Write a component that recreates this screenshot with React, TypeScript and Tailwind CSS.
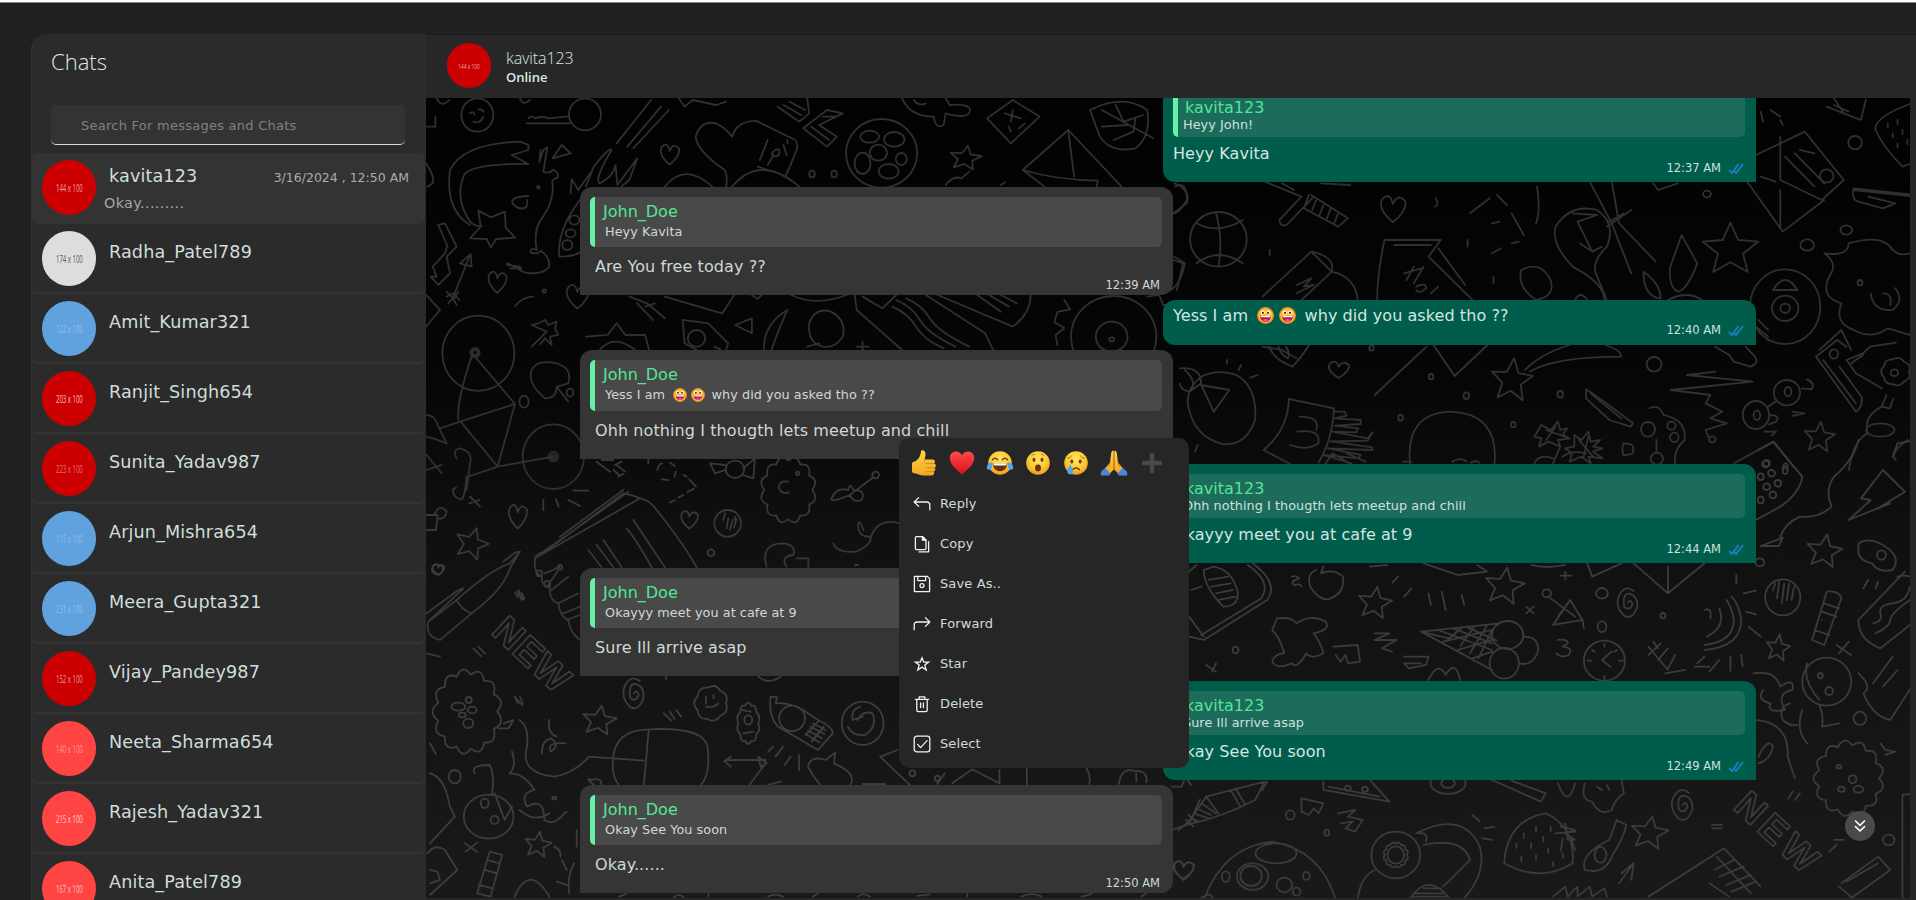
import React from "react";

/* ---------- doodle wallpaper ---------- */

const circ = (cx: number, cy: number, rx: number, ry: number = rx) =>
  `M${cx - rx} ${cy}a${rx} ${ry} 0 1 0 ${2 * rx} 0a${rx} ${ry} 0 1 0 ${-2 * rx} 0`;

const star = (cx: number, cy: number, rx: number, ry: number = rx, rot = 0.15) => {
  const p: string[] = [];
  for (let i = 0; i < 10; i++) {
    const k = i % 2 ? 0.45 : 1;
    const a = rot - Math.PI / 2 + (i * Math.PI) / 5;
    p.push(`${(cx + Math.cos(a) * rx * k).toFixed(1)} ${(cy + Math.sin(a) * ry * k).toFixed(1)}`);
  }
  return `M${p.join("L")}Z`;
};

const heart = (x: number, y: number, w: number, h: number = w) =>
  `M${x} ${y + h}Q${x - w * 1.3} ${y} ${x - w * 0.8} ${y - h * 0.7}Q${x - w * 0.2} ${y - h * 1.2} ${x} ${y - h * 0.3}Q${x + w * 0.4} ${y - h * 1.1} ${x + w} ${y - h * 0.5}Q${x + w * 1.1} ${y + h * 0.2} ${x} ${y + h}Z`;

const cloud = (cx: number, cy: number, rx: number, ry: number, n = 11) => {
  let d = "";
  for (let i = 0; i <= n; i++) {
    const a = (i / n) * 2 * Math.PI;
    const m = ((i - 0.5) / n) * 2 * Math.PI;
    const x = (cx + Math.cos(a) * rx).toFixed(1);
    const y = (cy + Math.sin(a) * ry).toFixed(1);
    d += i === 0 ? `M${x} ${y}` : `Q${(cx + Math.cos(m) * rx * 1.35).toFixed(1)} ${(cy + Math.sin(m) * ry * 1.3).toFixed(1)} ${x} ${y}`;
  }
  return d;
};

const spiral = (x: number, y: number, rx: number, ry: number = rx) =>
  `M${x} ${y}q${rx * 0.3} ${-ry * 0.3} ${rx * 0.4} ${ry * 0.1}q${-rx * 0.2} ${ry * 0.5} ${-rx * 0.7} ${ry * 0.2}q${-rx * 0.2} ${-ry} ${rx * 0.5} ${-ry * 0.9}q${rx * 0.7} ${ry * 0.2} ${rx * 0.6} ${ry * 0.9}q${-rx * 0.4} ${ry * 0.9} ${-rx * 1.1} ${ry * 0.6}q${-rx * 0.8} ${-ry * 0.6} ${-rx * 0.5} ${-ry * 1.3}q${rx * 0.5} ${-ry * 0.9} ${rx * 1.3} ${-ry * 0.4}`;

const topLeft = [
  circ(172, 75, 48, 50), "M150 70q10-8 14 4M190 65q-6-10-14-6M160 95q20 8 30-14M20 110h26v-30M50 25q15 30 38 5M300 25q10 25 30 5",
  "M325 85q10-12 20 0q20-8 40 0l60-6M320 100H450", circ(495, 73, 48),
  "M300 155L325 165L325 180L275 195L325 222Q170 220 135 250Q100 320 150 395Q165 410 185 408M300 155Q130 160 90 240Q75 360 150 405",
  "M175 362L212 382L255 365L257 412L285 443L228 447L213 473L200 447L150 445L182 410Z",
  "M362 180L358 215L370 180L382 172L370 245q20 8 28-6q22 10 14 25q-20 4-14 20q5 50-35 105Q340 420 350 480q-20-10-18 8q22 6 30-6q30 20 25 50q-25 25-75 15l-50-28M260 525l40 5M270 535l35 0",
  "M398 205L425 165L452 190Z M325 318Q270 320 278 340Q300 365 320 350L322 330", circ(355, 292, 4),
  "M452 310L455 268L475 300L510 250M480 330Q410 420 418 500Q470 500 490 480", circ(463, 390, 15, 14), circ(452, 430, 15, 12), circ(442, 465, 15),
  "M55 405L75 400L110 470L80 500L90 550L55 585L32 560L50 560L38 530L75 490L82 468Z",
  "M150 495L100 620M120 520L152 492L155 530ZM80 620L100 610L118 630M85 640L98 625L110 645M80 605l20 20M115 605l-12 20",
  heart(232, 575, 28, 34), "M285 648Q310 620 340 620", circ(373, 603, 5), heart(472, 618, 34, 38), "M18 615L60 660L18 710M18 220Q45 260 38 280L22 290",
  circ(175, 790, 108, 113), circ(165, 788, 14), circ(165, 788, 8), "M155 800Q110 930 115 990M165 800L285 942M60 1015L120 995L285 942L233 1130L122 995M145 1160L233 1130L400 1100",
  circ(400, 1100, 92, 97), circ(400, 1100, 14), circ(400, 1100, 7), "M110 1105Q95 1080 120 1075Q160 1085 150 1120L140 1200", circ(312, 935, 14, 18),
  "M18 975Q45 975 55 1010L80 1060L40 1045L18 1040M335 770L380 725L335 705L355 700L375 690L385 705L410 695L405 715L415 735L390 740L395 765L375 745L362 762",
  "M375 925Q320 880 335 840Q350 810 400 818Q460 830 445 880L410 890Q410 925 375 925ZM410 890L445 935", circ(450, 908, 10, 12),
  "M20 1095L65 1150M20 1140L65 1125",
].join("");

const topMid = [
  "M205 30L118 160M230 50L145 170M250 60L160 175M40 290L60 230Q100 170 105 180Q60 270 75 280Q110 260 115 225L120 285L170 205L150 270L130 290",
  heart(252, 192, 24, 32), "M395 290Q400 240 385 235Q320 180 318 140Q330 90 370 100Q395 115 410 140Q420 95 470 92L570 150Q580 165 570 190L545 260",
  "M480 210l20-60M500 225l15-30M475 230l30 12M510 190q20-25 20 0q-10 20-20 0M540 165l8 30M550 150v10",
  "M240 290Q290 215 360 290M410 290Q480 190 580 290", circ(612, 252, 7, 10), circ(668, 252, 7, 10),
  circ(788, 190, 90, 103), circ(758, 140, 24, 18), circ(820, 148, 26, 22), circ(780, 188, 22, 24), circ(740, 220, 20, 32), circ(838, 207, 14, 18), circ(806, 244, 25, 22),
  "M840 25Q860 80 920 80Q925 120 945 105L950 70Q1010 90 1012 60Q1010 40 960 45L950 25M870 30q10 20 30 10M275 25l15 25 20-20 60 15 25-10",
  "M525 50L580 95L605 70L600 25M540 45l45 30M555 35l40 25M590 115L650 170L675 140L630 105L690 70L650 60ZM610 110l45 40M640 80l30 0",
  "M1055 85L1120 30L1188 80L1115 160ZM1100 70l40 15M1120 60l-5 35M1110 110l5 15M1135 115l15-15", star(1000, 205, 42, 38), "M950 285q20-30 40-20l20-20M1090 285l10-8",
  "M1315 60Q1400 10 1460 60Q1470 140 1430 175Q1370 190 1340 140ZM1345 60L1475 145M1380 45l20 50 50-20M1345 110l65-5M1375 150l50-25 5-40",
  "M1260 120L1145 240L1200 290M1260 120L1275 260M1260 120L1395 290M1145 240Q1230 270 1335 272L1332 290",
  "M1530 290Q1560 270 1560 330Q1540 370 1528 370M1528 500L1555 520Q1545 580 1520 600",
  "M150 620l45 20 45 45M170 640l40 50M190 650l25-10M240 620L385 670L415 615M460 615l15 12 10-12M560 615Q620 650 700 615",
  "M40 740L95 735L118 700L140 735L190 735L200 780M75 780Q110 730 165 780M285 690L350 700L400 760L395 780M285 690L290 760L320 780M365 770l15 8", circ(320, 745, 22, 25),
  "M418 705L460 685V730ZM550 660Q490 700 490 780M550 660Q520 740 510 780M605 700Q620 650 660 665Q700 690 690 740Q670 775 640 770Q600 760 605 700M600 770l30-10",
  "M720 615L725 660L840 780M740 620L790 655L825 615M1165 615Q1165 670 1120 710L930 615M900 615L1050 730L1070 780M825 630q40 20 60 60t90 80M815 650q40 20 60 60t70 65M850 625q40 20 60 60t100 85M1030 615l60 50M1060 615l50 35M1090 615l40 25",
  circ(1375, 740, 108, 122), circ(1370, 740, 40, 45), circ(1370, 748, 6), "M1250 630l15 28-32 8-8 30 25 18-22 22 5 30M1460 620l30-5 10 30 30 0M725 770l30 0M740 755v25",
].join("");

const topRight = [
  circ(140, 448, 58, 82), "M95 400Q140 435 190 390M95 520Q140 470 190 520M135 368Q150 450 140 530M50 280Q85 300 75 340L48 370M48 510L68 520L55 600",
  "M235 275L310 320L265 390Q265 410 280 405L335 320M325 315L315 355L385 410L405 385L330 315M340 330l-8 30M355 345l-8 30M370 355l-8 30M385 370l-8 30M270 280l25 20M350 280l60 5",
  heart(497, 355, 26, 42), "M585 325q8 20-2 25M655 370l40-45M710 315l20 30M740 370l25 65M740 460l15-5M792 290Q800 360 790 400M650 450v20M700 400l15-5M700 490l18-15M703 560v20M245 480v15",
  "M480 450H595L570 500L660 630M480 450Q465 550 465 630M500 465H575M590 475l55 110M520 550l35-15M525 570l15-40M540 580l20-50M545 590q20-15 20 5q-15 20-20 5M575 610l15-20",
  "M230 620L330 485L372 545L310 630M330 485Q380 500 372 545Q420 560 425 630M300 585l30-20-15 25 20-5-35 25",
  "M930 630Q930 580 865 530Q820 460 830 410Q860 340 915 360Q955 400 935 470Q900 520 915 560L935 630M865 370l50 5-40 20 30 90 20-15M870 630q10-30 25 0",
  "M900 275L945 400L985 550M945 275L960 400L1035 515M935 410L985 360M940 395l30-25M880 460l20 20",
  "M760 540Q800 510 820 570Q830 620 790 630Q750 590 760 540M1010 545Q1045 580 1045 625Q1010 620 1010 545M1088 435L1120 520Q1100 600 1080 605Q1060 590 1065 530ZM1060 630q40-30 70 0",
  star(1188, 480, 60, 82, 0), circ(1300, 650, 72, 112), circ(1300, 655, 27, 38), circ(1300, 655, 10, 14), "M1275 600q25-60 50 0ZM1245 690l20 30M1240 710l25 30M1245 725l20 25",
  "M1240 195L1340 125L1420 270L1375 330L1290 270V140M1215 260L1295 425L1380 330M1300 200l60 90M1320 190l60 90M1330 180l30 10M1290 300V410M1250 260l30 15M1030 280l10 20 40-20",
  circ(1385, 258, 14, 20), "M1440 300L1568 320M1440 295Q1435 330 1450 335L1500 355L1525 340L1470 320M1440 295L1568 315", circ(1443, 158, 14, 20), circ(1425, 420, 12, 14), circ(1345, 465, 14, 17), circ(1140, 312, 8, 10),
  "M1385 50L1420 70L1400 25M1420 70L1455 90L1465 30M1400 45l30 20M1485 120Q1480 80 1568 35M1485 120Q1500 170 1540 230L1568 215M1510 100v12M1530 90v12M1520 130v12M1540 120v12M1530 160v12M1550 150v12",
  "M1250 65l5 30M1270 60l20 20M1290 90l5 15M1380 490Q1430 500 1430 460Q1500 430 1520 480Q1535 500 1555 490M1380 490Q1410 520 1390 560Q1370 620 1415 640Q1400 700 1440 720Q1480 750 1510 715L1555 735M1475 610Q1480 665 1520 660Q1545 630 1525 595M1500 610q20 0 15 35M1370 780l45-60 20 60",
  circ(1453, 578, 5, 8), "M230 770l40 10 30 25M450 770v12",
].join("");

const midRight = [
  "M45 110Q80 85 120 105Q165 140 160 240Q140 320 90 312Q30 290 18 200Q10 150 45 110M45 135L105 150L72 215ZM0 85Q45 80 45 130L20 155Q0 150 0 130M10 90q25 30 15 60M100 60v10M130 75l-5 15M165 105l-15 8M38 315l-6 20",
  "M190 20Q200 60 240 80Q260 50 275 15M210 20Q215 45 230 55Q235 35 225 20M232 177L328 205Q325 300 295 368M232 177Q230 270 178 330L235 372M255 230Q300 230 290 270M250 275Q300 265 295 310Q270 335 235 315",
  "M330 215l20 0 5 12-25 8 55 5 0 12-55 5 50 8-5 12-50-2 75 20 10-18-10 25-80 2 90 18 0 8-95-5 70 20-5 10-75-10 60 25M310 370l15-30 35 30M355 340l40 25",
  heart(338, 88, 22, 26), "M525 20L415 165M540 15L585 108L655 15", star(707, 122, 46, 68, 0.1), "M735 90Q770 40 830 15M745 95Q800 50 940 50Q940 30 905 15",
  "M490 372Q480 220 575 215Q680 220 670 372M475 365h18M580 365q20-15 30 0M620 368q10-10 18 0M865 148Q880 160 965 250L960 260L915 240L865 175ZM875 160L940 235",
  "M770 255l20 15 15-25 5 25 15-5-10 20 15 10-25 5 5 20-25-15-20 15 5-25-15-5ZM840 285l15 15 15-25 5 30 20-5-15 20 20 5-20 10 20 20-30-5 5 20-20-20-25 15 5-25-15-15 20-5ZM795 370L810 320M755 370q10-30 40-15M815 350q20-20 50-10",
  "M780 270l40 20M800 260l-20 40M850 300l30 50M870 290l-10 60",
  "M1000 205Q1020 190 1030 225Q1080 240 1075 300Q1050 330 1055 372M1015 300V340", circ(997, 268, 15, 22), circ(1047, 257, 9, 12), circ(1053, 292, 9, 14), circ(1016, 356, 13, 18),
  "M1045 150L1220 125L1080 105L1140 95M1045 150L1130 165L1120 190L1155 215L1130 235L1165 250L1120 270L1125 290", circ(1134, 298, 7, 9),
  circ(1293, 158, 28, 38), circ(1227, 225, 28, 42), circ(1295, 155, 7, 14), circ(1229, 226, 7, 14), "M1253 200l18-18M1335 118Q1355 130 1345 148L1325 145M1255 225q25 0 15 20l-15 8M1305 215l25 5-25 8M1245 275l25 0-10 12M1140 20L1170 45L1180 65L1215 80Q1235 70 1225 50L1205 20",
  "M1355 50L1440 215Q1455 200 1452 170L1405 80M1355 50L1400 0L1420 20M1370 60L1440 190M1420 60L1440 100L1495 145M1420 60l35-20 15-20 55-12M1430 70l25-25", circ(1393, 42, 9, 14),
  cloud(1525, 95, 28, 38, 7), circ(1522, 98, 8, 10), star(1362, 293, 34, 48, 0.1), "M1180 370L1265 305L1310 385M1505 165L1495 200L1512 205L1520 175M1495 200Q1455 230 1465 280Q1435 300 1425 390M1525 360Q1510 340 1550 300", circ(1492, 270, 30, 20),
  circ(1250, 370, 7, 10), circ(1290, 378, 5, 8), circ(1010, 73, 16, 22), circ(610, 167, 6, 10), circ(810, 163, 6, 10), circ(408, 24, 5, 8), circ(535, 110, 5, 8), circ(470, 233, 5, 9), circ(710, 254, 5, 8), "M945 310q-5 20 0 35q25 0 20-15q5-20-20-20",
].join("");

const bottomRight = [
  "M210 370Q265 430 240 480L110 600L80 590M200 375Q250 425 228 475L105 585M110 390Q110 440 150 500Q180 500 180 460Q170 390 130 380ZM120 420l40-10M125 440l40-10M135 460l35-10M140 480l35-10M80 530l30 60M85 450l20-10M95 375l-15 20",
  "M340 390Q320 400 328 440Q345 480 365 478Q400 460 395 410Q375 385 350 400L355 380M290 410q10-5 15 5q-20 10-10 20q15-5 15 5",
  "M260 535Q290 530 300 550Q330 520 360 545Q370 570 335 580Q350 610 355 640Q330 660 320 640Q300 690 290 670Q260 690 250 665Q255 640 275 640Q265 590 250 570Z",
  star(460, 490, 36, 50), star(725, 440, 42, 58), "M535 445L520 470M508 410l-12 18M570 460l5 35M597 455l8 55M638 465l5 30M450 380l35-5M770 500l15 20M785 500l-15 20M850 395v24M840 407h22M1200 405v24M1115 680l30 0",
  "M555 575L715 550M555 575L700 690M555 575l60 22M640 562l-30 35M665 558l-30 60M690 555l-35 85M700 570l-28 85M590 570l110 60M620 565l80 45M650 562l60 40M600 605l100-35M630 630l70-30M660 655l40-20", circ(732, 585, 32, 42), circ(725, 670, 30, 46), "M765 590Q800 590 793 640Q780 680 755 670",
  circ(812, 460, 9, 12), "M815 470L870 530M860 480L885 540L825 555ZM885 540L888 565M860 480L835 530", circ(925, 460, 12, 16), spiral(978, 488, 24, 44), circ(925, 560, 9, 16), circ(1050, 527, 5, 8), circ(175, 630, 6, 10),
  "M375 620l50-5 5 50-25 5-5-25-10 20-10-20M460 580l30 0-30 20 45 0-30 25 20 10M520 650l50 0-5 25-35 10-10-15 35 0M115 675l20 20M135 670l-8 25M570 720q20-60 35-15q20-50 30 15",
  circ(930, 662, 42, 60), "M945 635L925 660L942 680M930 612v8M930 708v8M895 662h8M960 662h8M905 630l5 5M955 630l-5 5M835 600q20-5 20 12q-15 8-8 8q20 5 10 25q-15 10-25-5M1020 620l40 70M1030 605l10 20M1045 610l-25 35M1060 625l-20 35M1075 645l-15 40M1095 690l-40 10M1135 510q15-10 12 25",
  "M1135 630Q1210 620 1210 540Q1205 490 1190 470M1135 615Q1195 605 1195 540Q1190 500 1180 480M1140 590Q1180 560 1165 505M1215 460l25-8M1220 515l20 8M1225 560l25 30M1120 670l15-20M1165 660l-20 35M1188 650v42M1210 645l3 35",
  circ(1295, 472, 36, 54), "M1275 450l5-20M1283 475l5-50M1293 490l5-60M1303 480l5-50M1313 480l5-40M1385 455Q1410 450 1415 475L1380 615L1355 600ZM1380 490l30 15M1375 515l30 15M1360 570l30 15M1375 540v0",
  "M1545 395L1450 540Q1450 600 1495 625L1568 540M1530 410Q1550 400 1568 420M1480 550q20-5 15-30t25-30t35-50M1485 580q30-20 30-40t50-70M1470 420l-10 25M1490 425l-5 20", star(1285, 625, 26, 42),
  circ(1385, 725, 50, 72), "M1370 795Q1380 830 1375 860L1410 850M1345 670Q1335 720 1370 780", circ(1372, 707, 5, 8), circ(1390, 753, 8, 12), "M1450 700Q1480 740 1460 760Q1480 830 1515 840L1568 720M1500 740l30-50M1480 730l40-80M1405 615l30 30M1430 605l-20 35",
  "M1235 700Q1280 690 1290 740Q1320 710 1315 750Q1280 760 1300 810Q1260 820 1270 790Q1240 780 1255 750M1335 810Q1320 870 1345 910M1325 855Q1310 860 1295 840Q1285 800 1310 790", circ(1453, 835, 13, 20), cloud(1430, 1015, 62, 100, 13), circ(1438, 1018, 8, 12), circ(1415, 1048, 7, 8), circ(1450, 1048, 10, 10), circ(1410, 980, 5),
  "M1240 840Q1310 850 1305 950L1320 1015M1245 950q20-60 30-30q-5 40-30 50M1495 910l10 20 20 5-20 10M1540 1380V1065L1568 1060M1150 1155h20M1150 1165h20M1315 1055l-8 20M1330 1060l-10 20M1400 1200l20 0M1405 1215l-15 20",
  "M1275 5L1335 110Q1330 160 1290 200L1240 240M1275 5L1245 30", circ(1260, 72, 7, 10), circ(1272, 100, 7, 10), circ(1285, 130, 7, 10), circ(1250, 110, 6, 10), circ(1262, 140, 7, 10), circ(1275, 165, 7, 10), circ(1250, 180, 6, 10), circ(1300, 90, 5, 12),
  "M1500 90L1545 155L1490 205L1515 190L1430 240L1475 180L1455 175ZM1450 0Q1440 60 1400 110Q1380 150 1395 200Q1370 235 1330 230Q1300 250 1290 290M1250 318l45-25-8 25ZM1520 50l10-40 38-10",
  star(1380, 335, 38, 52), "M1450 310Q1470 290 1500 315Q1540 350 1520 390Q1490 400 1478 370Q1450 360 1450 335Z", circ(1497, 345, 9, 14), circ(1248, 367, 9, 12), "M990 370L1060 460L1135 370M1060 380V460M895 370L905 410L965 370M560 370L630 405L690 395L670 375M780 375q30 12 70 0",
  "M110 1380Q150 1220 250 1205Q350 1230 380 1380M130 1380Q125 1350 105 1375", circ(210, 1310, 32, 40), circ(207, 1308, 22, 30), circ(258, 1240, 42, 30), circ(275, 1335, 16, 22), circ(155, 1310, 8, 16), circ(320, 1308, 7, 12), circ(300, 1355, 8, 12),
  circ(503, 1245, 50, 70), circ(503, 1245, 17, 26), cloud(503, 1245, 22, 34, 12), "M545 1180Q640 1110 675 1220Q690 1300 640 1380M560 1215Q640 1190 655 1260L600 1340M425 1380Q430 1310 460 1290M530 1380Q570 1290 615 1380M540 1360h60M535 1370h70M560 1345h35M550 1180q20-5 15 25M660 1125l15 20M685 1165l20-5M680 1195l20 5",
  "M725 1270Q730 1140 810 1120Q870 1160 865 1270Q800 1330 725 1270M750 1210v14M765 1180v14M780 1210v14M790 1160v14M805 1190v14M820 1160v14M760 1250v14M790 1245v14M815 1225v14M825 1265v14M845 1240v14M830 1180l40-5M850 1150l5 50 15 0-20-20 20-10-30-10M845 1195l-5 40M860 1190l10 40",
  "M975 1155L955 1140L940 1200Q880 1240 890 1290Q930 1305 945 1250Q970 1190 975 1155", circ(922, 1245, 12, 24), star(1022, 1180, 40, 52), spiral(1090, 1095, 25, 46),
  "M890 1030Q880 1080 905 1085Q920 1130 945 1110Q950 1080 970 1060L965 1020M915 1040l10 10M935 1035l5 15", "M355 1025V1050L490 1085L450 1020M365 1040L470 1070", circ(405, 1045, 6, 8), circ(440, 1048, 6, 8),
  "M75 1155L115 1070L235 1025L215 1080Q150 1130 75 1155M45 1170L75 1155M115 1070l25 50M165 1050l20 50M175 1045l20 50M85 1135l15 10M90 1120l30 15M95 1105l30 20M105 1090l30 30M45 1040l20 0 5-20M230 1050L240 1025", circ(610, 1030, 36, 32), circ(610, 1030, 14, 14),
  circ(287, 1125, 9, 14), circ(362, 1178, 5, 9), "M310 1075l45 15-10 30-10-15-10 20-15-10ZM385 1120l35-10-15 20 30 10-15 35-20-10 15-20-25 5M700 1020L800 1085L810 1060L740 1022M835 1030q20 80 35 0",
  "M960 1330L990 1270M965 1300L990 1270L985 1320M1020 1370L1175 1225L1250 1340M1160 1250l70 110M1155 1290l40-30M1165 1310l50-30M1180 1335l50-30M1190 1355l50-30M1145 1330l40 40M1415 1330L1490 1250L1515 1290L1430 1380M1410 1340l25 30M1425 1325l65-55", circ(1512, 1200, 12, 16),
  "M825 1370l25-30 5 30 20-30 0 30 25-30 5 30 25-25 5 25", heart(68, 1288, 22, 28),
].join("");

const bottomLeft = [
  cloud(95, 455, 60, 112, 13), circ(77, 440, 14, 12), circ(98, 420, 6, 9), circ(105, 450, 9, 10), circ(97, 490, 10, 14), circ(85, 465, 7), "M168 490l20-10-10 25-20 0",
  "M460 508Q570 500 578 560Q585 640 565 675M460 508Q390 510 388 600Q385 650 400 675M460 508L450 675M388 595L450 602M200 480Q220 500 215 560Q200 640 270 650Q310 640 340 590L388 595M245 580q0-40 18-45q20 20 0 40q-10-30 30-25M260 480q-5 40 15 50M20 550l12 32",
  star(360, 483, 36, 46), spiral(430, 400, 24, 46), cloud(585, 430, 30, 48, 7), "M575 410v20M590 405v10M575 440q15 5 25-10M490 460l15 22M502 455l10 22M515 450l10 20M495 350v8M680 350q20 25 45 0",
  "M705 410Q700 470 720 500L800 570L830 520Q830 500 800 480L770 450Q740 425 715 430L718 412Z", circ(748, 475, 26, 38), "M790 490l25 20M785 500l28 22M780 512l28 22M775 522l28 25M800 485l-25 40M812 500l-25 45",
  circ(890, 490, 42, 65), "M860 500Q870 530 895 525Q920 500 910 460Q890 450 880 480M885 440q-20 10-15 40l20-10", cloud(660, 490, 20, 55, 10), circ(660, 480, 8, 14), "M650 520l20-5M645 450l20 5",
  "M615 600H695M625 590L612 603L625 620M680 590L697 610L685 620ZM695 610L662 675M700 675l25-10M730 560l-15 30M710 560l-10 15M745 590l-12 25M762 585v45",
  "M780 620Q785 585 815 600L835 578L832 610Q880 640 865 675M780 620Q790 650 805 675M890 672h45M960 570L925 590L985 675M1040 672L1055 640", circ(990, 640, 6, 9), circ(1040, 655, 5, 8), "M1070 670L1110 628L1165 670L1165 630M1220 625V675M1340 625Q1350 650 1345 672M1405 672q5-50 30-40q30 0 25 35M1440 640v25M1510 650q15-20 20-20l20 45",
  circ(138, 770, 50, 66), "M110 640Q100 615 140 615Q150 640 145 700M185 575Q195 620 180 640Q210 640 230 690Q200 700 215 740Q250 710 250 780Q270 800 290 760L295 755M150 700L170 780L185 740M200 750q30 40 60 10", circ(130, 730, 8, 14), circ(150, 780, 8, 12), circ(70, 650, 12, 20), circ(270, 715, 4),
  "M20 640Q50 650 60 740L70 770L20 850M15 880Q30 850 50 870L75 930L20 1005M20 930l15 5 5 25-20 10M140 875L165 885L142 1010L115 1000ZM135 900l25 10M130 930l25 10M118 975l28 10M190 1010Q220 910 260 1010M90 850L115 875M115 848L92 875",
  star(237, 855, 28, 40), "M270 860q15 10 12 30M285 900l10 30M310 910q-15 40-10 90M275 965l20 10M315 810v50M190 410l15 25M195 95l10 25M205 100l5 15", circ(35, 28, 11, 15),
  "M350 675q-20-25-5-15q20-10 20 15", heart(1535, 930, 20, 30), "M1525 810L1550 780L1568 720M1540 780l15 20M1545 765l15 20M400 1010l15-8M510 1012q10-15 20 0M580 1010v-8M700 1010q15-12 30 0M790 1010l10-10M880 1010q10-15 25 0M1000 1008l25-5M1100 1010v-8M1210 1010q20-15 40 0M1330 1010l20-8M1450 1010l10-10",
].join("");

const midLeft = [
  "M345 355Q350 340 375 335L610 160Q640 165 660 175Q690 180 710 210Q790 310 830 382M345 355L660 175M625 155L370 335M610 150L420 290M640 240Q700 330 735 382M620 265Q650 300 695 382M550 300L605 382M530 315L580 382M505 330L545 382",
  "M345 355Q340 400 365 410Q365 440 390 440Q385 480 415 490Q420 530 445 540Q450 580 480 600M375 400L420 380M385 435l30-45M395 450l50-40M415 490l60-30M430 520l50-20M440 540l40-15", circ(358, 400, 9), circ(382, 432, 9), circ(420, 382, 7),
  "M300 335L270 370Q210 390 110 480L25 545Q15 590 60 600L155 520Q250 450 270 385L300 335L285 338L250 365M110 480Q125 510 155 520M30 540L130 445L115 450L20 520", star(155, 312, 52, 50, 0.3), heart(293, 228, 28, 38), heart(808, 238, 26, 28), heart(55, 388, 18),
  "M150 170l30 30M148 190l30-10M140 110Q135 170 125 178Q100 175 98 150l10-8M370 180v30M408 178l8 22M445 180l35 18M460 152l45 0M18 225h35l-5 45H20M45 220Q60 190 80 215Q75 240 55 235",
  circ(945, 88, 28, 26), "M915 75L870 70L885 100L915 90M970 85L1005 55L1000 115L970 105", circ(923, 250, 40), "M910 240l5-20M920 265l5-30M930 270l8-30M942 262l8-25M945 230v10", circ(873, 338, 10),
  cloud(1105, 150, 72, 88, 12), "M1105 125q-30-5-28 20q10 20 30 12", circ(1133, 100, 5), circ(1367, 105, 10), "M1360 112L1290 165Q1230 190 1235 175Q1250 140 1285 150Q1290 125 1300 150Q1340 150 1325 180Q1300 190 1290 165",
  "M530 65l40 30M545 60l35 0M580 90l18 15M590 75l25 20M595 110l15-8M605 65l-20 10M790 105l10 5M808 118l20 22M822 146l-20 10M790 165l-15 8M765 180l-15 8M712 90q5-20 15-20M750 68l15 10M768 95l-5 15M745 120l-20-2M685 60v10",
  "M1240 310Q1250 340 1310 335Q1360 310 1350 290Q1310 290 1315 250Q1320 240 1330 270M1350 300Q1370 230 1440 250M1040 380Q1020 310 1090 310Q1130 315 1120 345Q1080 350 1100 380M1130 355h35v25M1305 375l10 0M295 450l15 28M285 458l8 14M175 620l20 20M160 625l25 25M285 770l8 20M300 770l8 20M20 640l40 10",
].join("");

const layers: { t: string; d: string; o: string }[] = [
  { t: "translate(420 90) scale(.3333)", d: topLeft, o: "#303030" },
  { t: "translate(570 90) scale(.3954 .3333)", d: topMid, o: "#303030" },
  { t: "translate(1150 90) scale(.4886 .3333)", d: topRight, o: "#303030" },
  { t: "translate(1180 340) scale(.4694 .3333)", d: midRight, o: "#323232" },
  { t: "translate(420 440) scale(.3333)", d: midLeft, o: "#383838" },
  { t: "translate(1150 440) scale(.4886 .3333)", d: bottomRight, o: "#3b3b3b" },
  { t: "translate(420 560) scale(.4974 .3333)", d: bottomLeft, o: "#3d3d3d" },
];

const Wallpaper = () => (
  <svg className="absolute inset-0 h-full w-full" viewBox="426 98 1484 800" preserveAspectRatio="none" fill="none" strokeWidth="1.8" strokeLinecap="round" strokeLinejoin="round" aria-hidden="true">
    {layers.map((l) => (
      <path key={l.t} transform={l.t} d={l.d} stroke={l.o} vectorEffect="non-scaling-stroke" />
    ))}
    <g stroke="#3d3d3d" strokeWidth="1.6" className="font-['Liberation_Sans'] font-bold" fontSize="38">
      <text transform="translate(490 633) rotate(43)" textLength="90">NEW</text>
      <text transform="translate(1732 808) rotate(43)" textLength="98">NEW</text>
    </g>
  </svg>
);

/* ---------- emoji ---------- */

const FaceDefs = () => (
  <svg width="0" height="0" className="absolute">
    <defs>
      <radialGradient id="skin" cx=".5" cy=".35" r=".65">
        <stop offset="0" stopColor="#ffe65c" />
        <stop offset=".6" stopColor="#fdc936" />
        <stop offset="1" stopColor="#ee9a1c" />
      </radialGradient>
      <linearGradient id="hand" x1="0" y1="0" x2="0" y2="1">
        <stop offset="0" stopColor="#ffd54a" />
        <stop offset="1" stopColor="#f5a623" />
      </linearGradient>
      <linearGradient id="love" x1="0" y1="0" x2="0" y2="1">
        <stop offset="0" stopColor="#ff4b4b" />
        <stop offset="1" stopColor="#d6101c" />
      </linearGradient>
    </defs>
  </svg>
);

const Grin = ({ size }: { size: string }) => (
  <svg viewBox="0 0 20 20" className={`inline-block align-[-3px] ${size}`} role="img" aria-label="grinning face">
    <circle cx="10" cy="10" r="9.2" fill="#fbc02d" stroke="#f08a24" strokeWidth="1.4" />
    <circle cx="6.8" cy="6.6" r="2.5" fill="#fff" />
    <circle cx="13.2" cy="6.6" r="2.5" fill="#fff" />
    <circle cx="7" cy="6.8" r="1.3" fill="#3b2314" />
    <circle cx="13" cy="6.8" r="1.3" fill="#3b2314" />
    <path d="M3.8 10.5h12.4c0 4.3-2.8 6.8-6.2 6.8s-6.2-2.5-6.2-6.8z" fill="#b5155b" />
    <path d="M4.4 10.5h11.2v1.6H4.6z" fill="#fff" />
    <path d="M6.5 15.5q3.5-2.5 7 0q-3.5 3-7 0z" fill="#f0559a" />
  </svg>
);

const reactions: { name: string; art: React.ReactNode }[] = [
  {
    name: "thumbs up",
    art: (
      <>
        <path d="M1 13.5C1 12 2.5 11.6 4 11.4C7 10 9.4 6.5 10 1.6C10.1.4 11.4 0 12.6.6C15 1.8 15 5.6 13.6 9.6H21.5C24.4 9.6 24.6 13 22.8 13.6C25.6 14 25.4 17.4 23.3 17.8C25 18.5 24.6 21.2 22.6 21.5C23.8 22.5 23 25.4 20.6 25.4H11.4C8.4 25.4 7.5 24 4.5 23.6C1.8 23.4 1 22.5 1 20.5Z" fill="url(#hand)" />
        <path d="M14.5 13.6h8.3M14.5 17.8h8.6M15 21.6h7.6" stroke="#d98a15" strokeWidth="1" fill="none" />
        <path d="M13.6 9.6q-1 3 1.5 4" stroke="#d98a15" strokeWidth=".8" fill="none" />
      </>
    ),
  },
  { name: "heart", art: <path d="M13 24.5C8 20 .8 14.5.8 8C.8 4 3.6 1.6 6.8 1.6C9.6 1.6 12 3.2 13 5.6C14 3.2 16.4 1.6 19.2 1.6C22.4 1.6 25.2 4 25.2 8C25.2 14.5 18 20 13 24.5Z" fill="url(#love)" /> },
  {
    name: "joy",
    art: (
      <>
        <circle cx="13" cy="13" r="11.8" fill="url(#skin)" />
        <path d="M5.5 9.8q2.6-3 5.2 0M15.3 9.8q2.6-3 5.2 0" stroke="#6b3d0c" strokeWidth="1.4" fill="none" strokeLinecap="round" />
        <path d="M5.6 13.2h14.8c-.4 5-3.4 8-7.4 8s-7-3-7.4-8z" fill="#6b3110" />
        <path d="M6.2 13.2h13.6l-.6 2.4H6.8z" fill="#fff" />
        <path d="M5.4 12.6C2 12.4-.4 15-.2 17.8C.2 20.6 4.2 20.4 4.8 17.6Z" fill="#4aa8ee" />
        <path d="M20.6 12.6C24 12.4 26.4 15 26.2 17.8C25.8 20.6 21.8 20.4 21.2 17.6Z" fill="#4aa8ee" />
      </>
    ),
  },
  {
    name: "surprised",
    art: (
      <>
        <circle cx="13" cy="13" r="11.8" fill="url(#skin)" />
        <ellipse cx="9" cy="9.8" rx="1.5" ry="2.1" fill="#6b3d0c" />
        <ellipse cx="17" cy="9.8" rx="1.5" ry="2.1" fill="#6b3d0c" />
        <ellipse cx="13" cy="18" rx="3" ry="3.4" fill="#6b3110" />
        <path d="M6.6 5.6q1.6-1.4 3.4-1.2M19.4 5.6q-1.6-1.4-3.4-1.2" stroke="#c27a17" fill="none" />
      </>
    ),
  },
  {
    name: "crying",
    art: (
      <>
        <circle cx="13" cy="13" r="11.8" fill="url(#skin)" />
        <ellipse cx="8.8" cy="11.4" rx="1.5" ry="2" fill="#6b3d0c" />
        <ellipse cx="17.2" cy="11.4" rx="1.5" ry="2" fill="#6b3d0c" />
        <path d="M9.6 19.6q3.4-3.4 6.8 0" stroke="#6b3110" strokeWidth="1.4" fill="none" strokeLinecap="round" />
        <path d="M4.6 8.4q2.6-.4 4-2.4M21.4 8.4q-2.6-.4-4-2.4" stroke="#a8650f" strokeWidth="1" fill="none" />
        <path d="M7.2 14.6C5.6 17.4 4.4 19.2 4.4 21.2C4.4 25.6 10 25.6 10 21.2C10 19.2 8.8 17.4 7.2 14.6Z" fill="#4aa8ee" />
      </>
    ),
  },
  {
    name: "folded hands",
    art: (
      <>
        <path d="M12.8 1C10.8.2 10.2 2 10 5L9 12.4L3.6 19L8 24.4L12.8 19.5Z" fill="url(#hand)" />
        <path d="M13.2 1C15.2.2 15.8 2 16 5L17 12.4L22.4 19L18 24.4L13.2 19.5Z" fill="url(#hand)" />
        <path d="M13 1.4V19.4M9.2 12.6L7.4 17M16.8 12.6L18.6 17" stroke="#b8730f" strokeWidth=".8" fill="none" />
        <path d="M4.2 17.8L9.4 23.6L8.4 25.6H-.2V22Z" fill="#4a86d8" />
        <path d="M21.8 17.8L16.6 23.6L17.6 25.6H26.2V22Z" fill="#4a86d8" />
      </>
    ),
  },
];

/* ---------- sidebar ---------- */

const contacts = [
  { name: "kavita123", label: "144 x 100", color: "bg-[#cc0000]", ink: "text-[#eaa0a0]", last: "Okay.........", time: "3/16/2024 , 12:50 AM" },
  { name: "Radha_Patel789", label: "174 x 100", color: "bg-[#dddddd]", ink: "text-[#555]" },
  { name: "Amit_Kumar321", label: "122 x 100", color: "bg-[#5fa2dd]", ink: "text-[#93c1ea]" },
  { name: "Ranjit_Singh654", label: "203 x 100", color: "bg-[#cc0000]", ink: "text-[#f0c0c0]" },
  { name: "Sunita_Yadav987", label: "223 x 100", color: "bg-[#cc0000]", ink: "text-[#e27070]" },
  { name: "Arjun_Mishra654", label: "115 x 100", color: "bg-[#5fa2dd]", ink: "text-[#8fbfe9]" },
  { name: "Meera_Gupta321", label: "231 x 100", color: "bg-[#5fa2dd]", ink: "text-[#93c1ea]" },
  { name: "Vijay_Pandey987", label: "152 x 100", color: "bg-[#cc0000]", ink: "text-[#e89a9a]" },
  { name: "Neeta_Sharma654", label: "140 x 100", color: "bg-[#ff4444]", ink: "text-[#ff9c9c]" },
  { name: "Rajesh_Yadav321", label: "215 x 100", color: "bg-[#ff4444]", ink: "text-[#ffd0d0]" },
  { name: "Anita_Patel789", label: "167 x 100", color: "bg-[#ff4444]", ink: "text-[#ffc0c0]" },
];

const Sidebar = () => (
  <aside className="flex h-full w-[395px] shrink-0 flex-col overflow-hidden rounded-tl-[16px] border-l border-[#333] bg-[#2b2b2b]">
    <h1 className="ml-[19px] mt-[12px] h-[30px] font-['Open_Sans'] text-[22px] font-light leading-[30px] text-[#dfe9e7]">Chats</h1>
    <div className="ml-[19px] mt-[29px] flex h-[40px] w-[354px] shrink-0 items-center rounded-[5px] border-b border-[#cfe0dc] bg-[#333333] pl-[30px] pt-[2px] text-[13px] tracking-[0.25px] text-[#7f8281]">
      Search For messages and Chats
    </div>
    <ul className="mt-[8px]">
      {contacts.map((c) => (
        <li key={c.name} className={`flex w-[393px] rounded-[6px] pl-[10px] pt-[7px] ${c.last ? "h-[71px] bg-[#333333]" : "h-[70px] border-b-2 border-[#333333]"}`}>
          <span className={`flex h-[55px] w-[54px] shrink-0 items-center justify-center rounded-full ${c.color}`}>
            <span className={`-mx-3 scale-x-[.6] whitespace-nowrap font-['Open_Sans'] text-[10px] leading-none ${c.ink}`}>{c.label}</span>
          </span>
          <div className="flex-1">
            <div className="flex items-center justify-between pr-[16px]">
              <span className={`ml-[13px] text-[17.6px] leading-[28px] tracking-[0.12px] text-[#cfdedb] ${c.last ? "mt-[2px]" : "mt-[7px]"}`}>{c.name}</span>
              <span className="mt-[7px] text-[12.5px] text-[#a9adac]">{c.time}</span>
            </div>
            <p className="ml-[8px] text-[14.4px] leading-[26px] tracking-[0.35px] text-[#a3a7a6]">{c.last}</p>
          </div>
        </li>
      ))}
    </ul>
  </aside>
);

/* ---------- messages ---------- */

type Msg = { mine: boolean; quoteBy?: string; quote?: React.ReactNode; body: React.ReactNode; time: string };

const asked = (first: string, second: string) => (
  <>
    Yess I am <Grin size={first} /> <Grin size={second} /> why did you asked tho ??
  </>
);

const messages: Msg[] = [
  { mine: true, quoteBy: "kavita123", quote: "Heyy John!", body: "Heyy Kavita", time: "12:37 AM" },
  { mine: false, quoteBy: "John_Doe", quote: "Heyy Kavita", body: "Are You free today ??", time: "12:39 AM" },
  { mine: true, body: asked("ml-[4px] h-[17px] w-[17px]", "mr-[3px] h-[17px] w-[17px]"), time: "12:40 AM" },
  { mine: false, quoteBy: "John_Doe", quote: asked("ml-[4px] h-[14px] w-[14px]", "mr-[2px] h-[14px] w-[14px]"), body: "Ohh nothing I thougth lets meetup and chill", time: "12:42 AM" },
  { mine: true, quoteBy: "kavita123", quote: "Ohh nothing I thougth lets meetup and chill", body: "Okayyy meet you at cafe at 9", time: "12:44 AM" },
  { mine: false, quoteBy: "John_Doe", quote: "Okayyy meet you at cafe at 9", body: "Sure Ill arrive asap", time: "12:46 AM" },
  { mine: true, quoteBy: "kavita123", quote: "Sure Ill arrive asap", body: "Okay See You soon", time: "12:49 AM" },
  { mine: false, quoteBy: "John_Doe", quote: "Okay See You soon", body: "Okay......", time: "12:50 AM" },
];

const Ticks = () => (
  <svg viewBox="0 0 16 11" className="h-[11px] w-[16px]" fill="none" stroke="#1580c0" strokeWidth="2">
    <path d="M1 7l3 3 6.5-9M6.5 8.5l1.5 1.5 7-9" />
  </svg>
);

const Sent = ({ m }: { m: Msg }) => (
  <div className={`relative ml-[583px] flex w-[593px] shrink-0 flex-col rounded-[12px] rounded-br-none bg-[#005c4b] px-[10px] ${m.quote ? "h-[99px] pt-[10px]" : "h-[45px] pt-[5px]"}`}>
    {m.quote && (
      <div className="mb-[6px] h-[44px] w-[572px] shrink-0 rounded-[5px] border-l-[5px] border-[#66f2a5] bg-[#1c6b5b] pt-[5px]">
        <p className="ml-[7px] text-[16px] leading-[19px] text-[#53e695]">{m.quoteBy}</p>
        <p className="ml-[5px] text-[12.8px] leading-[15px] tracking-[0.06px] text-[#cfe0dc]">{m.quote}</p>
      </div>
    )}
    <p className="h-[18px] text-[16px] leading-[22px] tracking-[0.07px] text-[#d3e6e1]">{m.body}</p>
    <div className="flex items-center justify-end gap-[7px] pr-[2px] text-[11.5px] leading-[15px] text-[#cfe0dc]">
      <span>{m.time}</span>
      <Ticks />
    </div>
  </div>
);

const Received = ({ m, tall }: { m: Msg; tall: boolean }) => (
  <div className={`relative flex w-[593px] shrink-0 flex-col rounded-[12px] rounded-bl-none bg-[#353535] px-[10px] pt-[10px] ${tall ? "h-[109px]" : "h-[108px]"}`}>
    <div className={`mb-[9px] w-[572px] shrink-0 rounded-[5px] border-l-[5px] border-[#66f2a5] bg-[#494949] pt-[5px] ${tall ? "h-[51px]" : "h-[50px]"}`}>
      <p className="ml-[8px] text-[16px] leading-[19px] text-[#53e695]">{m.quoteBy}</p>
      <p className="ml-[10px] text-[12.8px] leading-[21px] tracking-[0.06px] text-[#cfd8d6]">{m.quote}</p>
    </div>
    <p className="ml-[5px] text-[16px] leading-[22px] tracking-[0.09px] text-[#cfd8d6]">{m.body}</p>
    <p className="mt-auto pb-[2px] pr-[3px] text-right text-[11.5px] leading-[15px] text-[#cfd8d6]">{m.time}</p>
  </div>
);

/* ---------- context menu ---------- */

const Icon = ({ children }: { children: React.ReactNode }) => (
  <svg viewBox="0 0 18 18" className="h-[18px] w-[18px]" fill="none" stroke="#f2f2f2" strokeWidth="1.3" strokeLinecap="round" strokeLinejoin="round">
    {children}
  </svg>
);

const actions: { label: string; icon: React.ReactNode }[] = [
  { label: "Reply", icon: <path d="M5.6 2.6L1.2 7L5.6 11.4M1.6 7H13.6Q16.8 7 16.8 10V14.8" /> },
  { label: "Copy", icon: <><path d="M3.4 1.6H9.6L13 5V13.6Q13 14.6 12 14.6H3.4Q2.4 14.6 2.4 13.6V2.6Q2.4 1.6 3.4 1.6Z" /><path d="M9.4 1.6V5.2H13Z" fill="#f2f2f2" /><path d="M15.6 6.6V16.8H6" /></> },
  { label: "Save As..", icon: <><path d="M1.4 1.4H14.4L16.6 3.6V16.6H1.4Z" /><path d="M4.8 1.6V5.6H12.6V1.6" /><circle cx="9" cy="10.6" r="2" /></> },
  { label: "Forward", icon: <path d="M12.4 2.6L16.8 7L12.4 11.4M16.4 7H4.4Q1.2 7 1.2 10V14.8" /> },
  { label: "Star", icon: <path strokeLinejoin="miter" d="M9 2.8L10.7 7.1H15.6L11.8 10L13.2 15L9 12.1L4.8 15L6.2 10L2.4 7.1H7.3Z" /> },
  { label: "Delete", icon: <><path d="M2.4 4.4H15.6M6.2 4.2V1.8H11.8V4.2M3.8 4.6V15.2Q3.8 16.6 5.2 16.6H12.8Q14.2 16.6 14.2 15.2V4.6" /><path d="M7.6 8V12.6M10.4 8V12.6" /></> },
  { label: "Select", icon: <><rect x="1.2" y="1.2" width="15.6" height="15.6" rx="2.6" /><path d="M4.6 9.4L7.6 12.6L14 5.6" /></> },
];

const ContextMenu = () => (
  <div className="absolute left-[473px] top-[340px] z-10 h-[330px] w-[290px] rounded-[10px] bg-[#262626]">
    <div className="flex items-center gap-[12px] pl-[12px] pt-[12px]">
      {reactions.map((r) => (
        <svg key={r.name} viewBox="0 0 26 26" className="h-[26px] w-[26px] overflow-visible" role="img" aria-label={r.name}>
          {r.art}
        </svg>
      ))}
      <svg viewBox="0 0 26 26" className="h-[26px] w-[26px]" fill="#484848">
        <path d="M10.8 3h4.4v7.8h7.8v4.4h-7.8V23h-4.4v-7.8H3v-4.4h7.8z" />
      </svg>
    </div>
    <ul className="mt-[8px] pl-[14px]">
      {actions.map((a) => (
        <li key={a.label} className="flex h-[40px] items-center gap-[9px] text-[13px] tracking-[0.12px] text-[#cfdcd9]">
          <Icon>{a.icon}</Icon>
          {a.label}
        </li>
      ))}
    </ul>
  </div>
);

export default function App() {
  return (
    <div className="flex h-[900px] w-full flex-col overflow-hidden bg-[#202020] font-['DejaVu_Sans',sans-serif]">
      <FaceDefs />
      <div className="h-[3px] shrink-0 border-b border-[#8a8a8a] bg-white" />
      <div className="ml-[31px] mt-[31px] flex h-[866px]">
        <Sidebar />
        <main className="flex min-w-0 flex-1 flex-col border-t border-[#1a1a1a] bg-[#272727]">
          <header className="flex h-[63px] shrink-0 items-center bg-[#272727] pb-[2px] pl-[21px]">
            <span className="flex h-[45px] w-[44px] items-center justify-center rounded-full bg-[#cc0000]">
              <span className="-mx-3 scale-x-[.6] whitespace-nowrap font-['Open_Sans'] text-[8px] text-[#eaa0a0]">144 x 100</span>
            </span>
            <div className="ml-[15px] mt-[3px]">
              <p className="font-['Open_Sans'] text-[16px] font-light leading-[20px] tracking-[-0.1px] text-[#dce8e6]">kavita123</p>
              <p className="font-['Open_Sans'] text-[13px] font-semibold leading-[18px] text-[#dce8e6]">Online</p>
            </div>
          </header>
          <section className="relative mr-[6px] flex h-[800px] flex-col justify-end gap-[5px] overflow-hidden bg-[linear-gradient(180deg,#020202_0%,#060606_35%,#101010_55%,#191919_100%)] pb-[5px] pl-[154px]">
            <Wallpaper />
            {messages.map((m) => (m.mine ? <Sent key={m.time} m={m} /> : <Received key={m.time} m={m} tall={m.time === "12:42 AM"} />))}
            <ContextMenu />
            <button className="absolute left-[1419px] top-[713px] flex h-[30px] w-[30px] items-center justify-center rounded-full bg-[#4a4a4a]">
              <svg viewBox="0 0 14 14" className="h-[14px] w-[14px]" fill="none" stroke="#fff" strokeWidth="1.6" strokeLinecap="round" strokeLinejoin="round">
                <path d="M2.5 2L7 6.3L11.5 2M2.5 7.6L7 12L11.5 7.6" />
              </svg>
            </button>
          </section>
        </main>
      </div>
    </div>
  );
}
